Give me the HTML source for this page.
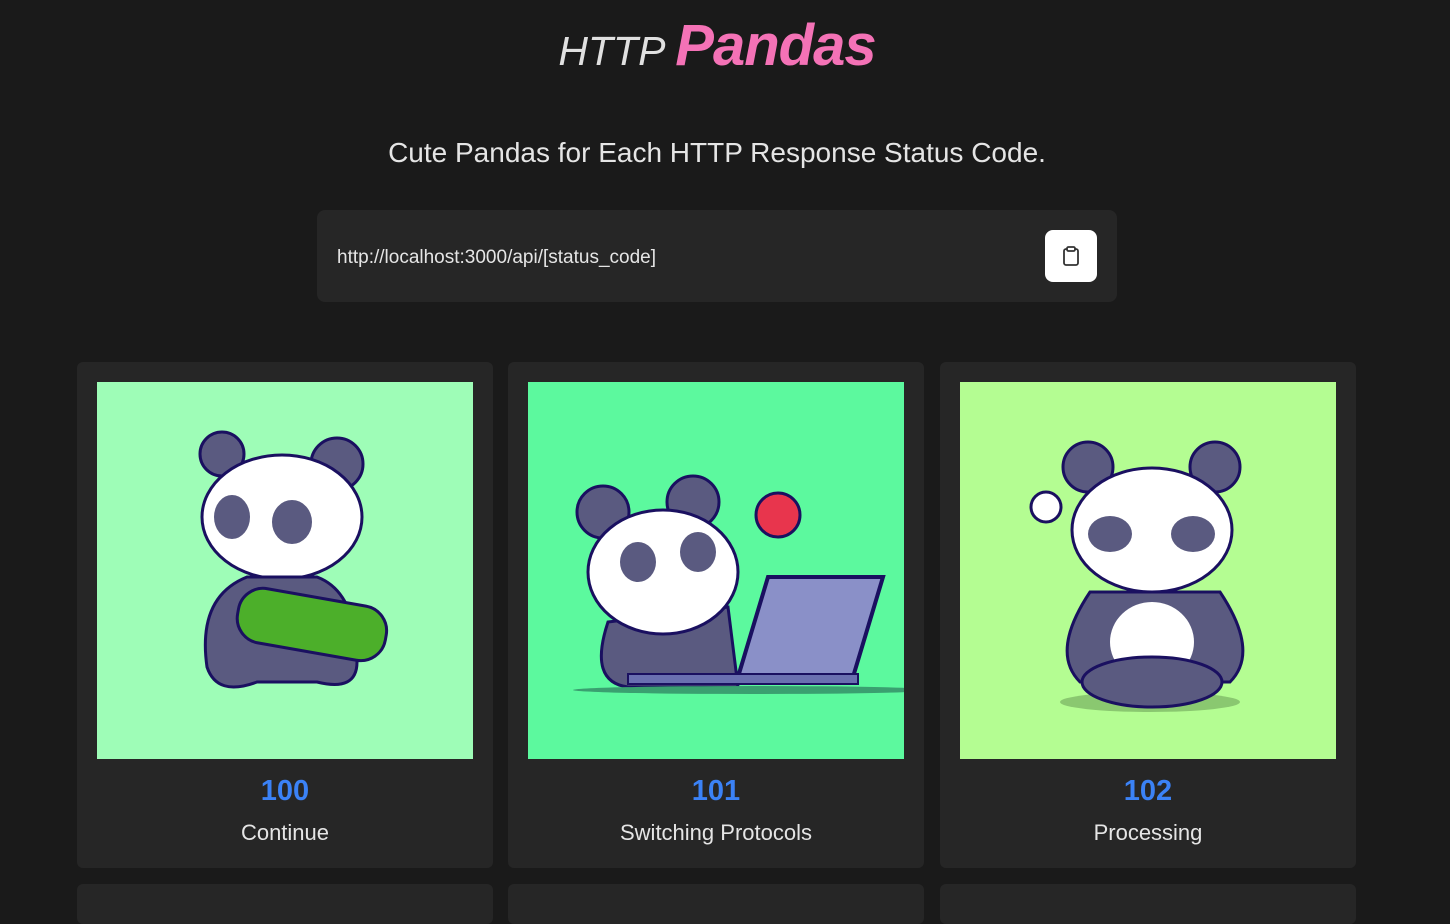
<!DOCTYPE html>
<html><head><meta charset="utf-8"><style>
body{margin:0;background:#1a1a1a;font-family:"Liberation Sans",sans-serif;color:#e5e5e5;width:1450px;height:899px;overflow:hidden;position:relative}
.t{position:absolute;top:12px;left:0;width:1434px;text-align:center;font-style:italic;white-space:nowrap}
.t .a{font-size:41px;color:#e0e0e0;font-weight:300}
.t .b{font-size:58px;color:#f472b6;font-weight:bold;letter-spacing:-1px}
.sub{position:absolute;top:137px;width:1434px;text-align:center;font-size:28px;color:#e5e5e5}
.box{position:absolute;left:317px;top:210px;width:800px;height:92px;background:#262626;border-radius:8px}
.box span{position:absolute;left:20px;top:37px;font-size:19px;color:#e5e5e5}
.btn{position:absolute;left:728px;top:20px;width:52px;height:52px;background:#fff;border-radius:8px}
.card{position:absolute;top:362px;width:416px;height:506px;background:#262626;border-radius:6px}
.card .img{position:absolute;left:20px;top:20px;width:376px;height:377px}
.code{position:absolute;top:413px;width:100%;text-align:center;font-size:29px;font-weight:bold;color:#3b82f6}
.lab{position:absolute;top:458px;width:100%;text-align:center;font-size:22px;color:#e5e5e5}
.c2{top:884px;height:40px}
</style></head><body>
<div class="t"><span class="a">HTTP </span><span class="b">Pandas</span></div>
<div class="sub">Cute Pandas for Each HTTP Response Status Code.</div>
<div class="box"><span>http://localhost:3000/api/[status_code]</span>
<div class="btn"><svg width="52" height="52" viewBox="0 0 52 52"><rect x="19" y="19" width="14" height="16" rx="2" fill="none" stroke="#333" stroke-width="1.8"/><rect x="22" y="17" width="8" height="4" rx="1.5" fill="#fff" stroke="#333" stroke-width="1.8"/></svg></div></div>

<div class="card" style="left:77px"><svg class="img" viewBox="0 0 376 377"><rect width="376" height="377" fill="#9efdb7"/>
<circle cx="125" cy="72" r="22" fill="#5a5a80" stroke="#1a1060" stroke-width="3"/><circle cx="240" cy="82" r="26" fill="#5a5a80" stroke="#1a1060" stroke-width="3"/>
<ellipse cx="185" cy="135" rx="80" ry="62" fill="#fff" stroke="#1a1060" stroke-width="3"/>
<ellipse cx="135" cy="135" rx="18" ry="22" fill="#5a5a80"/><ellipse cx="195" cy="140" rx="20" ry="22" fill="#5a5a80"/>
<path d="M150 195 q-50 20 -40 90 q10 30 50 15 l60 0 q40 10 40 -20 q0 -70 -40 -85z" fill="#5a5a80" stroke="#1a1060" stroke-width="3"/>
<rect x="140" y="215" width="150" height="55" rx="25" fill="#4caf2a" stroke="#1a1060" stroke-width="3" transform="rotate(10 215 242)"/>
</svg><div class="code">100</div><div class="lab">Continue</div></div>

<div class="card" style="left:508px"><svg class="img" viewBox="0 0 376 377"><rect width="376" height="377" fill="#5cf99e"/>
<circle cx="75" cy="130" r="26" fill="#5a5a80" stroke="#1a1060" stroke-width="3"/><circle cx="165" cy="120" r="26" fill="#5a5a80" stroke="#1a1060" stroke-width="3"/>
<path d="M80 240 q-20 60 20 65 l110 0 l-10 -80z" fill="#5a5a80" stroke="#1a1060" stroke-width="3"/>
<ellipse cx="135" cy="190" rx="75" ry="62" fill="#fff" stroke="#1a1060" stroke-width="3"/>
<ellipse cx="110" cy="180" rx="18" ry="20" fill="#5a5a80"/><ellipse cx="170" cy="170" rx="18" ry="20" fill="#5a5a80"/>
<path d="M240 195 l115 0 l-30 100 l-115 0z" fill="#8a90c8" stroke="#1a1060" stroke-width="4"/>
<rect x="100" y="292" width="230" height="10" fill="#6a70b0" stroke="#1a1060" stroke-width="2"/>
<ellipse cx="225" cy="308" rx="180" ry="4" fill="#3aa070"/>
<circle cx="250" cy="133" r="22" fill="#e8354d" stroke="#1a1060" stroke-width="3"/>
</svg><div class="code">101</div><div class="lab">Switching Protocols</div></div>

<div class="card" style="left:940px"><svg class="img" viewBox="0 0 376 377"><rect width="376" height="377" fill="#b4fd92"/>
<ellipse cx="190" cy="320" rx="90" ry="10" fill="#8ac870"/>
<circle cx="128" cy="85" r="25" fill="#5a5a80" stroke="#1a1060" stroke-width="3"/><circle cx="255" cy="85" r="25" fill="#5a5a80" stroke="#1a1060" stroke-width="3"/>
<path d="M130 210 q-40 60 -10 90 l150 0 q30 -30 -10 -90z" fill="#5a5a80" stroke="#1a1060" stroke-width="3"/>
<ellipse cx="192" cy="260" rx="42" ry="40" fill="#fff"/>
<ellipse cx="192" cy="300" rx="70" ry="25" fill="#5a5a80" stroke="#1a1060" stroke-width="3"/>
<ellipse cx="192" cy="148" rx="80" ry="62" fill="#fff" stroke="#1a1060" stroke-width="3"/>
<ellipse cx="150" cy="152" rx="22" ry="18" fill="#5a5a80"/><ellipse cx="233" cy="152" rx="22" ry="18" fill="#5a5a80"/>
<circle cx="86" cy="125" r="15" fill="#fff" stroke="#1a1060" stroke-width="3"/>
</svg><div class="code">102</div><div class="lab">Processing</div></div>

<div class="card c2" style="left:77px"></div><div class="card c2" style="left:508px"></div><div class="card c2" style="left:940px"></div>
</body></html>
